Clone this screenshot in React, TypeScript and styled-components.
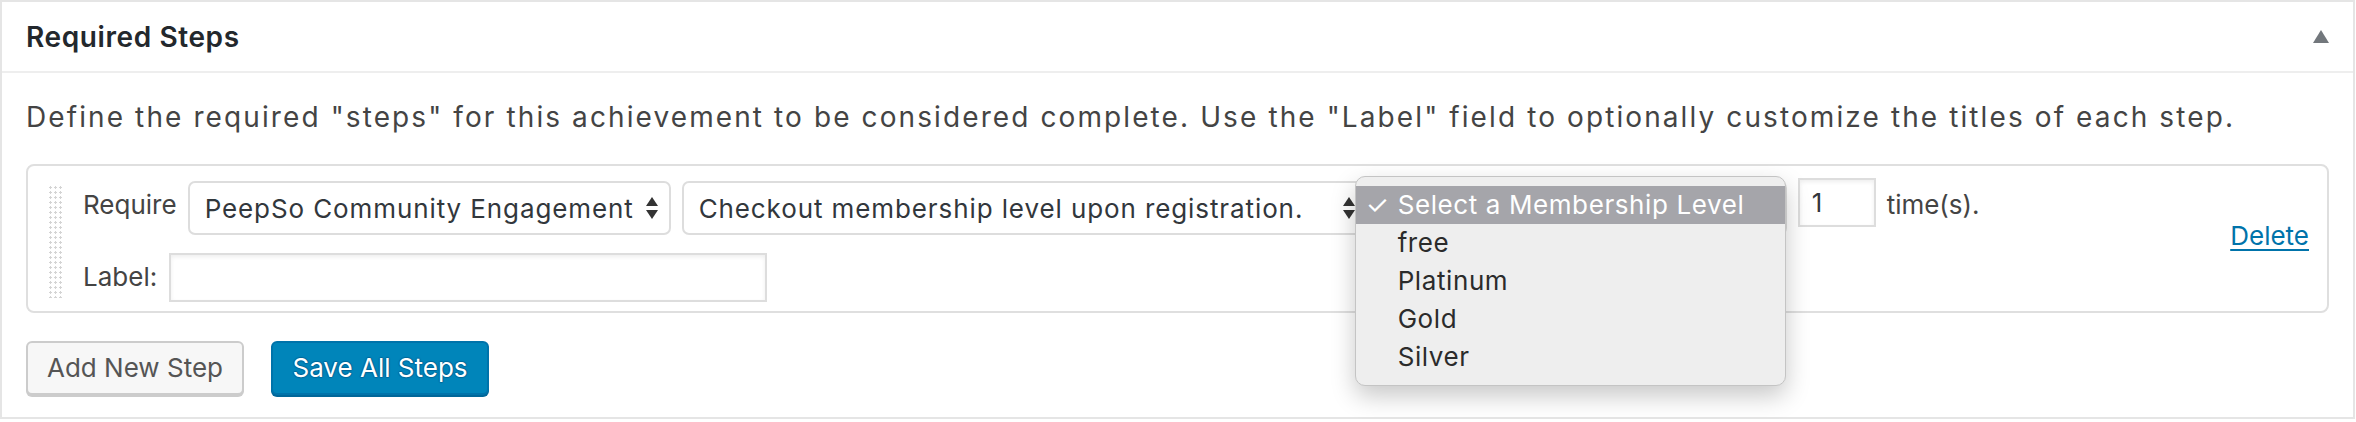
import React from 'react';
import styled, { createGlobalStyle } from 'styled-components';

const GlobalStyle = createGlobalStyle`
  body {
    margin: 0;
    background: #fff;
    font-family: Inter, "Liberation Sans", sans-serif;
    -webkit-font-smoothing: antialiased;
  }
`

const levels = ['free', 'Platinum', 'Gold', 'Silver']

const ArrowsIcon = () => (
  <svg width="14" height="24" viewBox="0 0 14 24">
    <polygon points="7,1 13,10 1,10" fill="#333" />
    <polygon points="1,14 13,14 7,23" fill="#333" />
  </svg>
)

const ToggleIcon = () => (
  <svg width="16" height="13" viewBox="0 0 16 13">
    <polygon points="8,0 16,13 0,13" fill="#72777c" />
  </svg>
)

type SelectProps = {
  text?: string,
  width: number,
}

const Select = ({ text, width }: SelectProps) => (
  <SelectBox $width={width}>
    <SelectText>{text}</SelectText>
    <ArrowsIcon />
  </SelectBox>
)

export default () => {
  return (
    <>
      <GlobalStyle />
      <Panel>
        <Header>
          <Title>Required Steps</Title>
          <ToggleIcon />
        </Header>
        <Inside>
          <Description>
            Define the required "steps" for this achievement to be considered complete. Use the "Label" field to optionally customize the titles of each step.
          </Description>
          <StepBox>
            <Handle />
            <StepFields>
              <Row>
                <InlineLabel>Require</InlineLabel>
                <Select text="PeepSo Community Engagement" width={483} />
                <Select text="Checkout membership level upon registration." width={686} />
                {/* the open select sits under its menu */}
                <PopupAnchor>
                  <Select width={408} />
                  <Popup>
                    <PopupItem $selected>
                      <Check>✓</Check>
                      Select a Membership Level
                    </PopupItem>
                    {levels.map(level => (
                      <PopupItem key={level}>{level}</PopupItem>
                    ))}
                  </Popup>
                </PopupAnchor>
                <CountInput>1</CountInput>
                <InlineLabel>time(s).</InlineLabel>
              </Row>
              <LabelRow>
                <InlineLabel>Label:</InlineLabel>
                <TextInput />
              </LabelRow>
            </StepFields>
            <DeleteLink>Delete</DeleteLink>
          </StepBox>
          <Buttons>
            <Button>Add New Step</Button>
            <Button $primary>Save All Steps</Button>
          </Buttons>
        </Inside>
      </Panel>
    </>
  )
}

const Panel = styled.div`
  box-sizing: border-box;
  width: 2355px;
  border: 2px solid #e5e5e5;
  background: #fff;
`

const Header = styled.div`
  height: 69px;
  padding: 0 24px;
  border-bottom: 2px solid #eeeeee;
  display: flex;
  align-items: center;
  justify-content: space-between;
`

const Title = styled.h2`
  margin: 0;
  font-size: 28px;
  font-weight: 600;
  letter-spacing: 0.6px;
  color: #23282d;
`

const Inside = styled.div`
  padding: 24px 24px 22px;
`

const Description = styled.p`
  margin: 0;
  font-size: 28px;
  letter-spacing: 2.1px;
  line-height: 40px;
  color: #444;
  white-space: nowrap;
`

const StepBox = styled.div`
  margin-top: 27px;
  box-sizing: border-box;
  height: 149px;
  border: 2px solid #dfdfdf;
  border-radius: 8px;
  padding: 12px 18px 12px 20px;
  display: flex;
`

const Handle = styled.div`
  width: 14px;
  height: 113px;
  margin-top: 7px;
  margin-right: 21px;
  background-image: radial-gradient(circle, #d4d4d4 1px, transparent 1.3px);
  background-size: 5px 5px;
`

const StepFields = styled.div`
  flex: 1;
  display: flex;
  flex-direction: column;
  gap: 15px;
`

const Row = styled.div`
  display: flex;
  align-items: flex-start;
  gap: 11px;
`

const LabelRow = styled.div`
  display: flex;
  align-items: center;
  gap: 12px;
`

const InlineLabel = styled.span`
  font-size: 26px;
  line-height: 54px;
  color: #444;
  white-space: nowrap;
`

const SelectBox = styled.div<{$width: number}>`
  box-sizing: border-box;
  width: ${props => props.$width}px;
  height: 54px;
  margin-top: 3px;
  padding: 0 10px 0 15px;
  border: 2px solid #dddddd;
  border-radius: 7px;
  background: #fff;
  display: flex;
  align-items: center;
  justify-content: space-between;
`

const SelectText = styled.span`
  font-size: 26px;
  letter-spacing: 0.9px;
  color: #32373c;
  white-space: nowrap;
  overflow: hidden;
`

const PopupAnchor = styled.div`
  position: relative;
`

const Popup = styled.div`
  position: absolute;
  left: -24px;
  top: -2px;
  width: 431px;
  box-sizing: border-box;
  padding: 9px 0;
  background: #eeeeee;
  border: 1px solid #c4c4c4;
  border-radius: 10px;
  box-shadow: 0 10px 24px rgba(0, 0, 0, 0.22);
`

const PopupItem = styled.div<{$selected?: boolean}>`
  position: relative;
  height: 38px;
  line-height: 38px;
  padding-left: 42px;
  font-size: 26px;
  letter-spacing: 0.6px;
  color: ${props => props.$selected ? '#fff' : '#2b2b2b'};
  background: ${props => props.$selected ? '#a5a5aa' : 'transparent'};
`

const Check = styled.span`
  position: absolute;
  left: 10px;
  top: 0;
`

const CountInput = styled.div`
  box-sizing: border-box;
  width: 78px;
  height: 49px;
  padding: 0 12px;
  border: 2px solid #dddddd;
  box-shadow: inset 0 2px 4px rgba(0, 0, 0, 0.07);
  font-size: 26px;
  line-height: 45px;
  color: #32373c;
`

const TextInput = styled.div`
  box-sizing: border-box;
  width: 598px;
  height: 49px;
  border: 2px solid #dddddd;
  box-shadow: inset 0 2px 4px rgba(0, 0, 0, 0.07);
`

const DeleteLink = styled.a`
  align-self: center;
  margin-bottom: 6px;
  font-size: 26px;
  color: #0073aa;
  text-decoration: underline;
  text-underline-offset: 4px;
  cursor: pointer;
`

const Buttons = styled.div`
  margin-top: 28px;
  display: flex;
  gap: 27px;
`

const Button = styled.div<{$primary?: boolean}>`
  box-sizing: border-box;
  height: 54px;
  width: 218px;
  border-radius: 6px;
  font-size: 26px;
  line-height: 50px;
  text-align: center;
  border: 2px solid ${props => props.$primary ? '#0073aa' : '#cccccc'};
  background: ${props => props.$primary ? '#0085ba' : '#f7f7f7'};
  color: ${props => props.$primary ? '#fff' : '#555'};
  box-shadow: 0 2px 0 ${props => props.$primary ? '#006799' : '#cccccc'};
  text-shadow: ${props => props.$primary ? '0 -1px 1px #006799, 1px 0 1px #006799, 0 1px 1px #006799, -1px 0 1px #006799' : 'none'};
`
